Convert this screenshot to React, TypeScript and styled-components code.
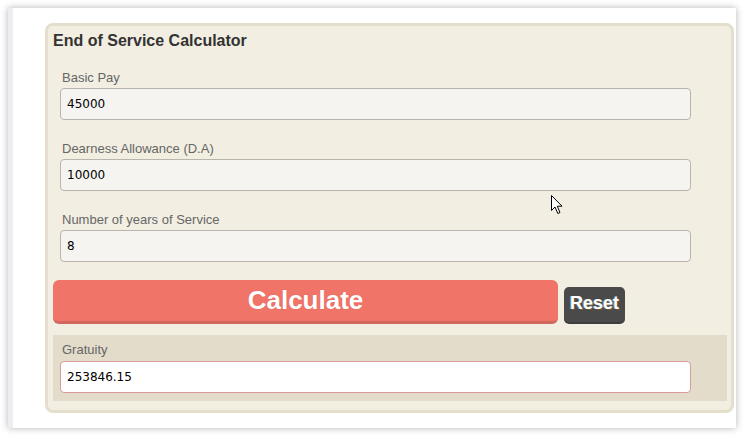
import React from "react";
import styled, { createGlobalStyle } from "styled-components";

const Global = createGlobalStyle`
  html, body { margin: 0; padding: 0; background: #ffffff; }
  body { font-family: "Liberation Sans", Arial, sans-serif; }
  * { box-sizing: border-box; }
`;

const Page = styled.div`
  position: relative;
  width: 744px;
  height: 435px;
  padding: 8px 8px 7px 8px;
`;

const Card = styled.div`
  width: 728px;
  height: 420px;
  background: #ffffff;
  border-left: 5px solid #eeeef2;
  box-shadow: 0 0 7px rgba(0, 0, 0, 0.3);
  padding: 15px 2px 15px 32px;
`;

const Panel = styled.div`
  width: 689px;
  height: 390px;
  background: #f2eee2;
  border: 3px solid #e4dfcd;
  border-radius: 8px;
  padding: 5px 0 0 0;
  display: flex;
  flex-direction: column;
`;

const Title = styled.h2`
  margin: 0 0 19px 5px;
  font-size: 16px;
  line-height: 20px;
  font-weight: bold;
  color: #333333;
`;

const Field = styled.div<{ $gap?: number }>`
  display: flex;
  flex-direction: column;
  gap: 3px;
  margin-bottom: ${(p) => p.$gap ?? 21}px;
`;

const Label = styled.label`
  margin-left: 14px;
  font-size: 13px;
  line-height: 15px;
  color: #666666;
`;

const Input = styled.input<{ $result?: boolean }>`
  margin-left: 12px;
  width: 631px;
  height: 32px;
  padding: 0 6px;
  font-family: "DejaVu Sans", Verdana, sans-serif;
  font-size: 12px;
  color: #000000;
  background: ${(p) => (p.$result ? "#ffffff" : "#f5f4f1")};
  border: 1px solid ${(p) => (p.$result ? "#dc9a98" : "#b9b5ad")};
  border-radius: 4px;
  outline: none;
`;

const ButtonRow = styled.div`
  display: flex;
  align-items: flex-end;
  gap: 6px;
  margin: -3px 0 11px 5px;
`;

const CalcButton = styled.button`
  width: 505px;
  height: 44px;
  background: #f07468;
  border: none;
  border-bottom: 3px solid #d2675d;
  border-radius: 6px;
  color: #ffffff;
  font-family: "Liberation Sans", Arial, sans-serif;
  font-size: 26px;
  font-weight: bold;
  padding: 0 0 1px 0;
  text-shadow: 0 0 1px rgba(160, 60, 50, 0.4);
`;

const ResetButton = styled.button`
  width: 61px;
  height: 37px;
  background: #4a4a4a;
  border: none;
  border-bottom: 2px solid #3e3e3e;
  border-radius: 5px;
  color: #ffffff;
  font-family: "Liberation Sans", Arial, sans-serif;
  font-size: 18px;
  font-weight: bold;
  padding: 0 0 2px 0;
  text-shadow: -1px 0 0 rgba(120, 190, 230, 0.7), 1px 1px 0 rgba(130, 90, 40, 0.8);
`;

const ResultArea = styled.div`
  margin: 0 4px 0 5px;
  background: #e3dccb;
  padding: 7px 0 8px 0;
  display: flex;
  flex-direction: column;
  gap: 4px;
`;

const ResultLabel = styled(Label)`
  margin-left: 9px;
`;

const ResultInput = styled(Input)`
  margin-left: 7px;
`;

const Cursor = styled.svg`
  position: absolute;
  left: 551px;
  top: 195px;
`;

export default function App() {
  return (
    <Page>
      <Global />
      <Card>
        <Panel>
          <Title>End of Service Calculator</Title>
          <Field>
            <Label>Basic Pay</Label>
            <Input defaultValue="45000" />
          </Field>
          <Field>
            <Label>Dearness Allowance (D.A)</Label>
            <Input defaultValue="10000" />
          </Field>
          <Field>
            <Label>Number of years of Service</Label>
            <Input defaultValue="8" />
          </Field>
          <ButtonRow>
            <CalcButton>Calculate</CalcButton>
            <ResetButton>Reset</ResetButton>
          </ButtonRow>
          <ResultArea>
            <ResultLabel>Gratuity</ResultLabel>
            <ResultInput $result defaultValue="253846.15" />
          </ResultArea>
        </Panel>
      </Card>
      <Cursor width="13" height="20" viewBox="0 0 13 20">
        <path
          d="M0.5 0.5 L0.5 15.5 L4 12 L6.8 18.5 L9 17.5 L6.3 11.2 L11 11.2 Z"
          fill="#ffffff"
          stroke="#000000"
          strokeWidth="1"
          strokeLinejoin="miter"
        />
      </Cursor>
    </Page>
  );
}
